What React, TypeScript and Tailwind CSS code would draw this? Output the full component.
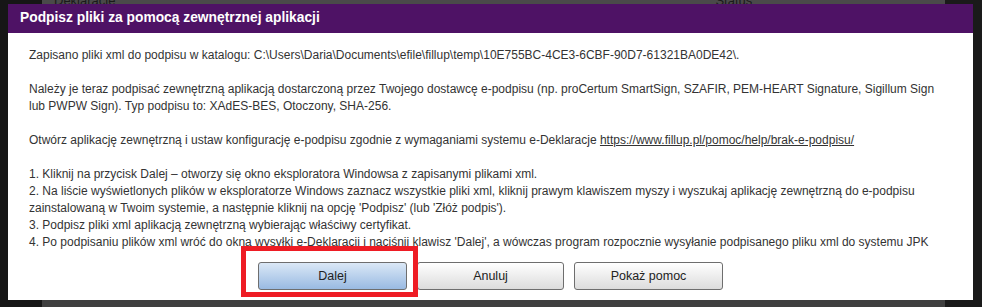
export default function App() {
  const font = { fontFamily: '"Liberation Sans", Arial, sans-serif' }

  return (
    <div className="relative w-[982px] h-[307px] overflow-hidden bg-[#1c1c1c]" style={font}>
      {/* Background app */}
      <div className="flex h-full">
        <div className="w-[42px] bg-[#161616]" />
        <div className="flex-1 flex flex-col bg-[#3f3f3f]">
          <div className="h-[14px] bg-[#4a4a4a] flex text-[13px] leading-[14px] text-[#1a1a1a]">
            <span className="ml-[12px] -mt-[6px]">Deklaracje</span>
            <span className="ml-[600px] -mt-[6px]">Status</span>
          </div>
          <div className="flex-1" />
        </div>
        <div className="w-[37px] bg-[#1a1a1a]" />
      </div>

      {/* Dialog */}
      <div className="absolute left-[8px] top-[4px] w-[965px] h-[296px] bg-white flex flex-col">
        <div className="h-[29px] bg-[#4e1265] flex items-center pl-[12px]">
          <h1 className="text-white font-bold text-[13.8px]">Podpisz pliki za pomocą zewnętrznej aplikacji</h1>
        </div>
        <div className="px-[21px] pt-[14px] text-[12px] leading-[17px] text-[#333333]">
          <p>Zapisano pliki xml do podpisu w katalogu: C:\Users\Daria\Documents\efile\fillup\temp\10E755BC-4CE3-6CBF-90D7-61321BA0DE42\.</p>
          <br />
          <p>
            Należy je teraz podpisać zewnętrzną aplikacją dostarczoną przez Twojego dostawcę e-podpisu (np. proCertum SmartSign, SZAFIR, PEM-HEART Signature, Sigillum Sign
            <br />
            lub PWPW Sign). Typ podpisu to: XAdES-BES, Otoczony, SHA-256.
          </p>
          <br />
          <p>
            Otwórz aplikację zewnętrzną i ustaw konfigurację e-podpisu zgodnie z wymaganiami systemu e-Deklaracje{' '}
            <a className="underline">https://www.fillup.pl/pomoc/help/brak-e-podpisu/</a>
          </p>
          <br />
          <p>1. Kliknij na przycisk Dalej – otworzy się okno eksploratora Windowsa z zapisanymi plikami xml.</p>
          <p>
            2. Na liście wyświetlonych plików w eksploratorze Windows zaznacz wszystkie pliki xml, kliknij prawym klawiszem myszy i wyszukaj aplikację zewnętrzną do e-podpisu
            <br />
            zainstalowaną w Twoim systemie, a następnie kliknij na opcję 'Podpisz' (lub 'Złóż podpis').
          </p>
          <p>3. Podpisz pliki xml aplikacją zewnętrzną wybierając właściwy certyfikat.</p>
          <p>4. Po podpisaniu plików xml wróć do okna wysyłki e-Deklaracji i naciśnij klawisz 'Dalej', a wówczas program rozpocznie wysyłanie podpisanego pliku xml do systemu JPK</p>
        </div>
        <div className="flex justify-center gap-[10px] mt-[11px]">
          <button className="relative w-[149px] h-[28px] rounded-[3px] border border-[#6e6e6e] bg-gradient-to-b from-[#dbe8f6] to-[#99bae2] text-[12.5px] text-[#222]">
            Dalej
            <span className="absolute -left-[18px] -top-[17px] w-[177px] h-[51px] border-[5px] border-[#ee1c24]" />
          </button>
          <button className="w-[147px] h-[28px] rounded-[3px] border border-[#6e6e6e] bg-gradient-to-b from-[#ffffff] to-[#dcdcdc] text-[12.5px] text-[#222]">
            Anuluj
          </button>
          <button className="w-[149px] h-[28px] rounded-[3px] border border-[#6e6e6e] bg-gradient-to-b from-[#ffffff] to-[#dcdcdc] text-[12.5px] text-[#222]">
            Pokaż pomoc
          </button>
        </div>
      </div>
    </div>
  )
}
